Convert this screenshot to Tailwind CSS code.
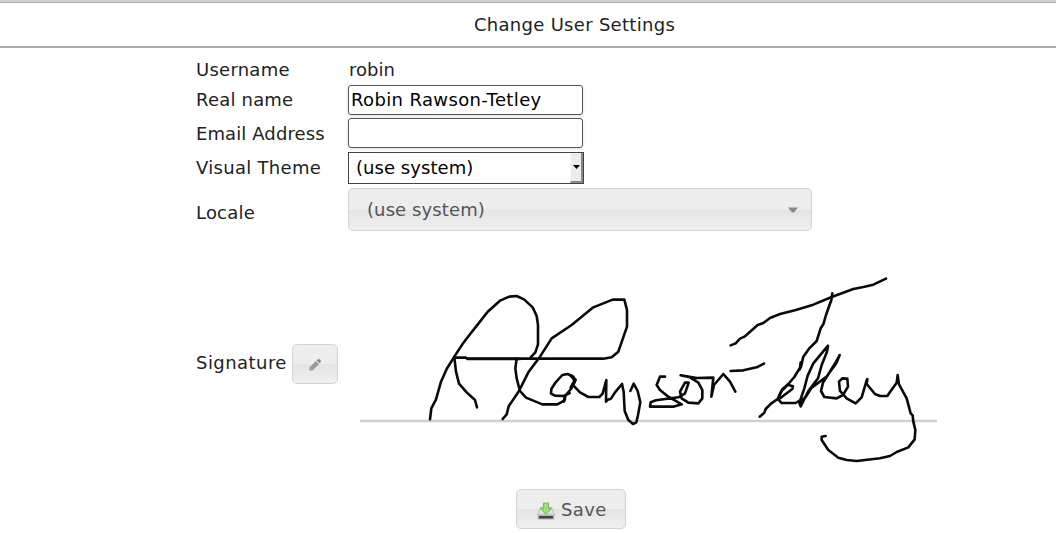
<!DOCTYPE html>
<html lang="en">
<head>
<meta charset="utf-8">
<title>Change User Settings</title>
<script src="https://cdn.jsdelivr.net/npm/@tailwindcss/browser@4"></script>
</head>
<body class="bg-white text-[#222] text-[18px] leading-[22px] h-[533px] overflow-hidden" style="font-family:'DejaVu Sans',sans-serif">
<header class="h-12 bg-white border-b-2 border-[#aaa]">
  <div class="h-[3px] bg-[#d0d0d0] border-b border-[#aaa]"></div>
  <h1 class="h-[43px] pl-[93px] flex items-center justify-center tracking-[0.3px]">Change User Settings</h1>
</header>
<form class="pl-[196px] pt-[10px]">
  <div class="h-[27px] flex pt-px"><span class="w-[152px] tracking-[0.25px]">Username</span><span class="pl-px">robin</span></div>
  <div class="h-[33px] flex"><label class="w-[152px] pt-[4px] tracking-[0.2px]">Real name</label>
    <div class="w-[235px] h-[30px] border border-[#555] rounded-[3px] text-black pl-[2px] pt-[3px] shadow-[0_1px_3px_#ddd] tracking-[0.37px]">Robin Rawson-Tetley</div></div>
  <div class="h-[34px] flex"><label class="w-[152px] pt-[5px] tracking-[0.1px]">Email Address</label>
    <div class="w-[235px] h-[30px] border border-[#555] rounded-[3px] shadow-[0_1px_3px_#ddd]"></div></div>
  <div class="h-[36px] flex"><label class="w-[152px] pt-[5px] tracking-[0.3px]">Visual Theme</label>
    <div class="w-[236px] h-[32px] border border-[#444] text-black pl-[7px] flex justify-between">
      <span class="pt-[4px] tracking-[0.05px]">(use system)</span>
      <span class="w-[13px] h-[30px] bg-[#ececec] border-r-2 border-b-2 border-[#888] border-l border-l-[#f6f6f6] flex items-center justify-center"><svg class="w-[7px] h-[4px]" viewBox="0 0 7 4"><path d="M0 0h7L3.5 4z"/></svg></span>
    </div></div>
  <div class="h-[69px] flex"><label class="w-[152px] pt-[14px] tracking-[0.2px]">Locale</label>
    <div class="w-[464px] h-[43px] border border-[#d3d3d3] rounded-[5px] bg-linear-to-b from-[#ededed] from-50% via-[#e4e4e4] via-51% to-[#f0f0f0] text-[#555] pl-[18px] pr-[13px] flex items-center justify-between">
      <span class="tracking-[0.1px]">(use system)</span>
      <svg class="w-[10px] h-[6px]" viewBox="0 0 10 6"><path d="M0 .5h10L6 5.5H4z" fill="#888"/></svg>
    </div></div>
  <div class="h-[232px] flex">
    <div class="w-[152px] pt-[87px] pr-[10px] flex justify-between"><span class="pt-[8px] tracking-[0.45px]">Signature</span>
      <div class="w-[46px] h-[40px] shrink-0 border border-[#d3d3d3] rounded-[5px] bg-linear-to-b from-[#ededed] from-50% via-[#e4e4e4] via-51% to-[#f0f0f0] flex items-center justify-center">
        <svg class="w-[12px] h-[12px] mt-px" viewBox="0 0 12 12"><path d="M.5 11.5V8.5L7 2l3 3-6.5 6.5z" fill="#999"/><path d="M7.7 1.3 9 .3h1.8l.9 1V3l-1.1 1.3z" fill="#888"/><path d="M1 8.5 3.5 11" stroke="#b0b0b0"/></svg>
      </div></div>
    <svg class="w-[600px] h-[220px]" viewBox="348 257 600 220" fill="none">
      <path d="M360 421H937" stroke="#d0d0d0" stroke-width="2.4"/>
      <g stroke="#0a0a0a" stroke-width="7.8" stroke-linecap="round" stroke-linejoin="round">
        <g transform="translate(420 265) scale(.33333)">
          <path d="M30 463L34 430L48 403L63 350L80 312L103 275L127 238L150 208L180 170L203 140L240 107L268 95L290 93L312 103L338 127L350 153L354 180V238L346 262L332 277"/>
          <path d="M103 277L108 320L117 356L140 382L165 405L171 427M103 278H137L143 282H300"/>
        </g>
        <g transform="translate(500 285) scale(.33333)">
          <path d="M8 402L20 388L26 364L57 318L85 262L120 215L155 160L215 120L278 68L338 44H373L381 75V125L355 200L335 217L310 221H-97"/>
          <path d="M50 221L46 250L50 280L60 318L78 338L127 358H172L194 346L196 334"/>
        </g>
        <g transform="translate(535 365) scale(.33333)">
          <path d="M86 110L90 93L108 72L118 52L115 35L98 27L82 30L62 52L49 72L48 86L60 92L86 93L104 84"/>
          <path d="M108 32L121 45L108 68" stroke-width="10"/>
          <path d="M112 58L135 82L160 96H193L203 86L214 45L213 110L218 104L228 101L240 82L261 57L266 80L269 138L280 165L294 177L304 172L309 150L316 112L308 78L296 56L286 78"/>
        </g>
        <g transform="translate(640 340) scale(.33333)">
          <path d="M75 110L60 110L50 135L60 150L85 170L125 193L100 200H30L32 187L48 181L115 172L135 160L146 128L135 128L120 155L125 175L145 188L175 190L187 175V150L175 128L150 112L122 106L170 114L220 113L214 170L222 135L250 102L270 125L286 155M272 93L310 91L350 82L372 71"/>
        </g>
        <g transform="translate(720 265) scale(.33333)">
          <path d="M32 241L47 235L60 221L75 214L113 180L130 174L150 159L180 147L225 136L280 119L335 96L400 72L430 66L460 59L498 41"/>
          <path d="M337 85L334 105L318 150L310 178L302 190L290 228L268 250L250 275L243 305L238 315"/>
        </g>
        <g transform="translate(755 335) scale(.33333)">
          <path d="M137 82L135 98L118 126L100 147L78 170L68 192L48 206L32 222L28 233L14 245"/>
          <path d="M72 184L82 163L98 149L114 154L112 162L88 180L70 194L80 204H122L136 195L148 160L158 122L175 85L219 32L216 50L200 90L189 130L160 168L137 214L133 204L152 186L170 158L215 125L242 82L254 60L244 85L222 115L204 143L198 168L208 186L245 190L264 180L279 155L277 131L262 130L252 140L255 168L275 190L302 205L320 187L335 136"/>
        </g>
        <g transform="translate(800 340) scale(.33333)">
          <path d="M202 117L200 132L225 162L240 168H262L270 156L290 128L293 105L297 133L320 175L332 220L338 226L340 245L346 270L344 298L325 322L290 336L270 348L240 355L170 363L140 360L115 353L85 330L65 300V290L77 288"/>
        </g>
      </g>
    </svg>
  </div>
  <div class="pl-[320px]">
    <div class="w-[110px] h-[40px] border border-[#d3d3d3] rounded-[5px] bg-linear-to-b from-[#ededed] from-50% via-[#e4e4e4] via-51% to-[#f0f0f0] text-[#555] flex items-center pl-[20px] gap-[6px]">
      <svg class="w-[18px] h-[18px] mt-[3px]" viewBox="0 0 18 18"><path d="M3.5 5.5h11L17.5 13H.5z" fill="#e2e2e2" stroke="#b5b5b5" stroke-width=".8"/><path d="M.5 12.5h17v4q0 1-1 1h-15q-1 0-1-1z" fill="#b8b8b8"/><path d="M2 14h14v2.5H2z" fill="#444"/><path d="M6.500 1h5v5.500h3L9 12.500 3.500 6.500h3z" fill="#9be07c" stroke="#66bb4a" stroke-width=".9"/></svg>
      <span class="tracking-[0.4px] pt-px">Save</span>
    </div>
  </div>
</form>
</body>
</html>
